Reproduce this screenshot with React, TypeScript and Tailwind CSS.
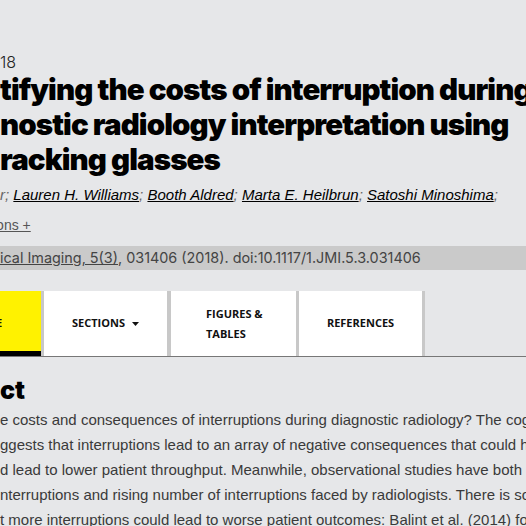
import React from 'react';

const authors = ['Lauren H. Williams', 'Booth Aldred', 'Marta E. Heilbrun', 'Satoshi Minoshima'];

const abstractLines = [
  'e costs and consequences of interruptions during diagnostic radiology? The cognitive',
  'ggests that interruptions lead to an array of negative consequences that could hurt',
  'd lead to lower patient throughput. Meanwhile, observational studies have both',
  'nterruptions and rising number of interruptions faced by radiologists. There is some',
  't more interruptions could lead to worse patient outcomes: Balint et al. (2014) found',
];

export default function App() {
  return (
    <div className="w-[526px] h-[526px] overflow-hidden bg-[#e6e7e9] text-[#111]">
      <div className="pt-[52px] text-[16px] leading-[20px] font-['Inter',sans-serif] font-light text-[#222]">18</div>

      <h1 className="font-['Inter',sans-serif] font-black text-[29.5px] leading-[35px] tracking-[-0.9px] text-black whitespace-nowrap">
        <span className="block">tifying the costs of interruption during</span>
        <span className="block">nostic radiology interpretation using</span>
        <span className="block">racking glasses</span>
      </h1>

      <div className="mt-[8px] font-['Liberation_Sans',Arial,sans-serif] italic text-[15px] leading-[20px] text-[#222] whitespace-nowrap">
        <span className="text-[#666]">r; </span>
        {authors.map((a) => (
          <span key={a}>
            <a className="underline text-black">{a}</a>
            <span className="text-[#666]">; </span>
          </span>
        ))}
      </div>

      <div className="mt-[11px] ml-[-7px] font-['Liberation_Sans',Arial,sans-serif] text-[14px] leading-[18px] text-[#555]">
        <span className="underline">ions +</span>
      </div>

      <div className="mt-[12px] h-[24px] flex items-center bg-[#cacaca] font-['Inter',sans-serif] text-[14.4px] text-[#444] whitespace-nowrap">
        <span className="underline">ical Imaging, 5(3)</span>
        <span>, 031406 (2018). doi:10.1117/1.JMI.5.3.031406</span>
      </div>

      <div className="mt-[21px] flex border-b border-[#777] font-['Open_Sans',sans-serif] font-bold text-[11px] text-[#111]">
        <div className="w-[41px] h-[65px] bg-[#fff200] border-b-[5px] border-black overflow-hidden flex items-center">
          <span className="ml-[-4px] mt-[5px]">E</span>
        </div>
        <div className="w-[3px] bg-[#c8c8c8]" />
        <div className="w-[123px] h-[65px] bg-white flex items-center justify-center gap-[7px]">
          <span>SECTIONS</span>
          <svg width="7" height="4" viewBox="0 0 7 4"><path d="M0 0h7L3.5 4z" fill="#111" /></svg>
        </div>
        <div className="w-[4px] bg-[#c8c8c8]" />
        <div className="w-[125px] h-[65px] bg-white flex items-center pl-[35px] leading-[20px]">
          <span>FIGURES &amp;<br />TABLES</span>
        </div>
        <div className="w-[3px] bg-[#c8c8c8]" />
        <div className="w-[123px] h-[65px] bg-white flex items-center justify-center">
          <span>REFERENCES</span>
        </div>
        <div className="w-[3px] bg-[#c8c8c8]" />
      </div>

      <h2 className="mt-[19px] font-['Inter',sans-serif] font-black text-[25px] leading-[28px] text-black">ct</h2>

      <div className="mt-[3px] font-['Liberation_Sans',Arial,sans-serif] text-[15px] leading-[25px] text-[#3a3a3a] whitespace-nowrap">
        {abstractLines.map((l) => (
          <p key={l}>{l}</p>
        ))}
      </div>
    </div>
  );
}
